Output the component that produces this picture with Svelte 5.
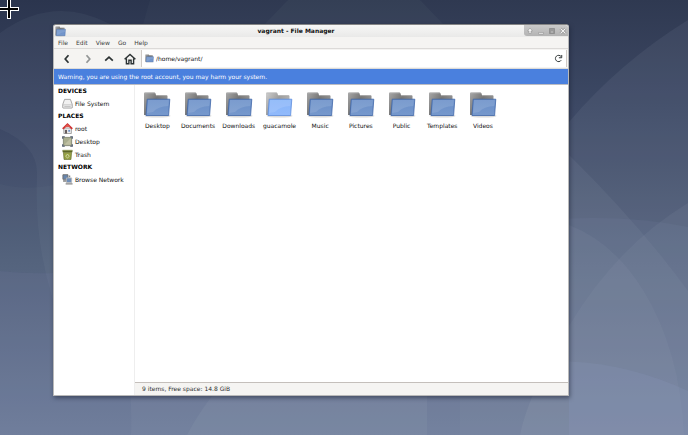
<script lang="ts">
  const menus = ['File', 'Edit', 'View', 'Go', 'Help']

  const groups = [
    { title: 'Devices', items: [{ name: 'File System', icon: 'drive' }] },
    {
      title: 'Places',
      items: [
        { name: 'root', icon: 'home' },
        { name: 'Desktop', icon: 'desktop' },
        { name: 'Trash', icon: 'trash' },
      ],
    },
    { title: 'Network', items: [{ name: 'Browse Network', icon: 'network' }] },
  ]

  const folders = ['Desktop', 'Documents', 'Downloads', 'guacamole', 'Music', 'Pictures', 'Public', 'Templates', 'Videos']

  let path = $state('/home/vagrant/')
  let hovered = $state('guacamole')
</script>

{#snippet folder(size: string, lit: boolean)}
  <svg class={size} viewBox="0 0 28 28" aria-hidden="true">
    <ellipse cx="14.5" cy="25" rx="13" ry="1.600" fill="#000" opacity=".14" />
    <path d="M1 24V2.500q0-1 1-1H11.500q1 0 1.200 1.500l.3 1.200H23.500q1 0 1 1V24z" fill={lit ? 'url(#backLit)' : 'url(#back)'} />
    <path d="M13 4.700H24M1.500 2H11.800" stroke="#b5b5b5" stroke-width=".6" fill="none" />
    <path d="M4.200 8.200H26.800L25.600 24.500H3z" fill={lit ? 'url(#frontLit)' : 'url(#front)'} stroke={lit ? '#5d8ddd' : '#3f66a8'} stroke-width=".8" />
    <path d="M5 9H25.900L25.400 15Q15 15.500 10 21L4.200 22z" fill="#fff" opacity=".12" />
  </svg>
{/snippet}

<div class="desktop">
  <svg class="wallpaper" viewBox="0 0 688 435" preserveAspectRatio="none" aria-hidden="true">
    <defs>
      <linearGradient id="sky" x2="0" y2="1">
        <stop offset="0" stop-color="#2b354e" />
        <stop offset=".25" stop-color="#3a4562" />
        <stop offset=".6" stop-color="#52607b" />
        <stop offset="1" stop-color="#6c7b98" />
      </linearGradient>
      <linearGradient id="back" x2="1" y2=".6"><stop stop-color="#a8a8a8" /><stop offset=".5" stop-color="#757575" /><stop offset="1" stop-color="#9c9c9c" /></linearGradient>
      <linearGradient id="backLit" x2="1" y2=".6"><stop stop-color="#cfcfcf" /><stop offset=".5" stop-color="#9c9c9c" /><stop offset="1" stop-color="#bbb" /></linearGradient>
      <linearGradient id="front" x2="0" y2="1"><stop stop-color="#688ec8" /><stop offset="1" stop-color="#7698cc" /></linearGradient>
      <linearGradient id="frontLit" x2="0" y2="1"><stop stop-color="#87b4f9" /><stop offset="1" stop-color="#91bafb" /></linearGradient>
    </defs>
    <rect width="688" height="435" fill="url(#sky)" />
    <g fill="#9ba8b8" fill-opacity=".1">
      <path d="M0 33Q53-6 110 24V300H53Q34 240 37 175 38 145 0 129z" fill-opacity=".07" />
      <path d="M0 184Q26 191 53 185V273Q26 274 0 271z" fill-opacity=".04" />
      <path d="M150 0H688V300H143V24z" fill-opacity=".04" />
      <path d="M288 0H420L443 24H265z" fill-opacity=".05" />
      <path d="M0 271Q30 274 53 273V435H0z" fill="#8a95b6" fill-opacity=".13" />
      <path d="M688 20Q620 62 569 122V435H688z" />
      <path d="M569 155Q640 225 688 291V435H569z" />
      <path d="M569 218.500Q635 216 688 227V435H569z" fill="#8b97bd" />
      <path d="M569 225Q613 242 643 290 680 350 684 435H569z" />
      <path d="M688 203Q617 246 569 326V435H688z" />
      <path d="M569 361.500Q630 364 688 391V435H569z" fill="#97a5d0" fill-opacity=".14" />
      <path d="M53 390H569V435H53z" fill="#8a95b6" fill-opacity=".13" />
      <path d="M130 390Q132 415 131 435H569V390z" />
      <path d="M217 390Q200 410 187 435H427V390z" fill-opacity=".14" />
      <path d="M460 390V435H569V390z" fill-opacity=".08" />
      <path d="M535 390Q524 415 520 435H569V390z" fill-opacity=".18" />
    </g>
  </svg>

  <svg class="cursor" viewBox="0 0 19 19" aria-hidden="true">
    <path d="M7 0h4v7h8v4h-8v8H7v-8H0V7h7z" fill="#fff" />
    <path d="M8 0h2v8h8v2h-8v8H8v-8H0V8h8z" />
  </svg>

  <main class="window">
    <header class="titlebar">
      {@render folder('app-icon', false)}
      <h1>vagrant - File Manager</h1>
      <div class="controls">
        <button aria-label="Roll up"><svg viewBox="0 0 8 8"><path d="M4 1l2.500 3H5v2.500H3V4H1.500z" /></svg></button>
        <button aria-label="Minimize"><svg viewBox="0 0 8 8"><path d="M1.500 5.500h5V7h-5z" /></svg></button>
        <button aria-label="Maximize"><svg viewBox="0 0 8 8"><path d="M1.500 1.500h5v5h-5z" fill="#999" stroke="#777" /><path d="M3 5h2" stroke="#eee" /></svg></button>
        <button aria-label="Close"><svg viewBox="0 0 8 8"><path d="M1.500 1.500l5 5m0-5l-5 5" stroke="#777" stroke-width="2.400" /><path d="M1.500 1.500l5 5m0-5l-5 5" stroke="#f4f4f4" stroke-width="1.200" /></svg></button>
      </div>
    </header>

    <nav class="menubar">
      {#each menus as menu}
        <button>{menu}</button>
      {/each}
    </nav>

    <div class="toolbar">
      <button aria-label="Back"><svg viewBox="0 0 12 12"><path d="M7.500 2.200L4.200 6l3.300 3.800" /></svg></button>
      <button aria-label="Forward" disabled><svg viewBox="0 0 12 12"><path d="M4.500 2.200L7.800 6 4.500 9.800" /></svg></button>
      <button aria-label="Parent folder"><svg viewBox="0 0 12 12"><path d="M2.200 7.700L6 4.200l3.800 3.500" /></svg></button>
      <button aria-label="Home"><svg viewBox="0 0 12 12"><path d="M.6 6.200L6 1.500l5.400 4.700M2.400 5.500v5.300h2.500V7.300h2.200v3.500h2.500V5.500" stroke-width="1.400" /></svg></button>
      <div class="location">
        {@render folder('path-icon', false)}
        <input aria-label="Location" bind:value={path} />
        <button aria-label="Reload"><svg viewBox="0 0 12 12"><path d="M9.600 8.300A4.200 4.200 0 1 1 9.500 3.500M10.300 1.300v3.700H6.500" stroke-width="1.300" /></svg></button>
      </div>
    </div>

    <p class="warning">Warning, you are using the root account, you may harm your system.</p>

    <div class="body">
      <aside>
        {#each groups as group}
          <h2>{group.title}</h2>
          {#each group.items as item}
            <button class="place">
              <svg viewBox="0 0 12 12" aria-hidden="true">
                {#if item.icon === 'drive'}
                  <path d="M2.800 1.500h6.400l2 5.500v3.500q0 .5-.5.500H1.300q-.5 0-.5-.5V7z" fill="#f1f1f1" stroke="#8d8d8d" stroke-width=".8" />
                  <path d="M1 7.500h10M2.500 9.300h7" stroke="#aaa" stroke-width=".7" />
                {:else if item.icon === 'home'}
                  <path d="M2 5.500h8.200V11.500H2z" fill="#eee" stroke="#888" stroke-width=".8" />
                  <path d="M3.200 7.500h2.300v4H3.200z" fill="#665d5d" />
                  <path d="M6.800 7.500h2v2h-2z" fill="#6e91c9" />
                  <path d="M.8 6.500L6 1.500l5.200 5" fill="none" stroke="#cf3434" stroke-width="2" />
                  <path d="M2.800 4.500L6 1.300l3 3z" fill="#e25a50" />
                {:else if item.icon === 'desktop'}
                  <path d="M1.500 1.500h9v9h-9z" fill="#a9ad8e" stroke="#7d826f" stroke-width=".9" />
                  <path d="M2.500 9.500L9.500 2.500v7z" fill="#bfc0a2" />
                  <path d="M.8 3V.8H3M9 .8h2.200V3M11.200 9v2.200H9M3 11.200H.8V9" fill="none" stroke="#4c5869" stroke-width="1.300" />
                {:else if item.icon === 'trash'}
                  <path d="M1.500 3.500h9l-.7 8H2.200z" fill="#94a043" stroke="#566020" stroke-width=".6" />
                  <path d="M.6 1h10.800v2.500H.6z" fill="#5c6727" />
                  <path d="M1 1.500h10" stroke="#b6be7c" stroke-width=".7" />
                  <path d="M4 8l2-2.500L8 8 6 9.700z" fill="none" stroke="#dde3b1" stroke-width=".9" />
                {:else}
                  <path d="M1 .8h5.500v5H1z" fill="#6685ad" stroke="#6c6c6c" stroke-width="1" />
                  <path d="M1.200 6.700h4.800v1.800H1.200z" fill="#888" />
                  <path d="M4.800 4.300h5.700v5H4.800z" fill="#6f8fba" stroke="#b9b9b9" stroke-width=".9" />
                  <path d="M4 10h7.500v1.500H4zM7.500 1.500h1.500v2H7.500z" fill="#858585" />
                {/if}
              </svg>
              {item.name}
            </button>
          {/each}
        {/each}
      </aside>

      <section>
        <div class="files">
          {#each folders as name}
            <button class="file" onmouseenter={() => (hovered = name)}>
              {@render folder('file-icon', hovered === name)}
              <span>{name}</span>
            </button>
          {/each}
        </div>
        <footer>9 items, Free space: 14.8 GiB</footer>
      </section>
    </div>
  </main>
</div>

<style>
  :global(body) {
    margin: 0;
  }
  .desktop {
    position: relative;
    display: flex;
    box-sizing: border-box;
    min-height: 100vh;
    padding: 24px 119px 39px 53px;
    font: 6px/12px 'DejaVu Sans', sans-serif;
    color: #111;
    overflow: hidden;
  }
  .wallpaper {
    position: absolute;
    inset: 0;
    width: 100%;
    height: 100%;
  }
  .cursor {
    position: absolute;
    top: 0;
    left: 0;
    width: 19px;
    height: 19px;
  }
  button {
    display: flex;
    align-items: center;
    justify-content: center;
    padding: 0;
    border: 0;
    background: none;
    font: inherit;
    color: inherit;
  }
  h1,
  h2,
  p {
    margin: 0;
    font-size: 6px;
  }
  .window {
    position: relative;
    display: flex;
    flex: 1;
    flex-direction: column;
    min-width: 0;
    box-sizing: border-box;
    border: 1px solid #b9b9b9;
    border-top-color: #858585;
    border-radius: 3px 3px 0 0;
    background: #f5f4f2;
    box-shadow: 1px 2px 4px rgba(20, 26, 44, 0.5);
  }
  .titlebar {
    display: flex;
    align-items: center;
    height: 12px;
    padding-left: 1px;
    border-radius: 3px 3px 0 0;
    background: linear-gradient(#f7f7f6, #e9e9e8);
  }
  .titlebar h1 {
    flex: 1;
    padding-left: 2px;
    text-align: center;
  }
  .app-icon {
    width: 11px;
    height: 11px;
  }
  .controls {
    display: flex;
    align-self: flex-start;
    border-radius: 0 3px 0 3px;
    background: linear-gradient(#cacaca, #b3b3b3);
  }
  .controls button {
    width: 11px;
    height: 11px;
  }
  .controls svg {
    width: 8px;
    height: 8px;
    fill: #f3f3f3;
    stroke: #888;
    stroke-width: 0.5;
  }
  .menubar {
    display: flex;
    gap: 8px;
    padding: 0 4px;
    border-bottom: 1px solid #dcdad8;
    color: #3c4041;
  }
  .menubar button {
    height: 11px;
  }
  .toolbar {
    display: flex;
    padding: 1px 1px 1px 2px;
    border-bottom: 1px solid #dddcda;
  }
  .toolbar button {
    width: 21px;
    height: 17px;
  }
  .toolbar button svg {
    width: 12px;
    height: 12px;
    fill: none;
    stroke: #2c3233;
    stroke-width: 1.7;
  }
  .toolbar button:disabled svg {
    stroke: #929595;
  }
  .location {
    display: flex;
    flex: 1;
    align-items: center;
    margin-left: 1px;
    border: 1px solid #cfcac6;
    border-width: 0 1px;
    padding-left: 3px;
    background: #fff;
  }
  .path-icon {
    width: 9px;
    height: 9px;
  }
  .location input {
    flex: 1;
    min-width: 0;
    padding: 0 2px;
    border: 0;
    outline: 0;
    background: none;
    font: inherit;
    color: inherit;
  }
  .location button {
    width: 16px;
  }
  .location button svg {
    width: 9px;
    height: 9px;
  }
  .warning {
    padding: 0 4px;
    border-bottom: 1px solid #bbbcc2;
    background: #4a80de;
    line-height: 15px;
    color: #fff;
  }
  .body {
    display: flex;
    flex: 1;
    background: #fff;
  }
  aside {
    width: 80px;
    border-right: 1px solid #eee;
  }
  h2 {
    padding-left: 4px;
    line-height: 12px;
    text-transform: uppercase;
    color: #000;
  }
  .place {
    gap: 2px;
    height: 13px;
    padding-left: 8px;
    white-space: nowrap;
  }
  .place svg {
    width: 11px;
    height: 11px;
  }
  section {
    display: flex;
    flex: 1;
    flex-direction: column;
    min-width: 0;
  }
  .files {
    display: grid;
    flex: 1;
    grid-template-columns: repeat(auto-fill, minmax(40px, 1fr));
    align-content: start;
    padding: 6px 24px 0 2px;
  }
  .file {
    flex-direction: column;
    gap: 1px;
  }
  .file-icon {
    width: 28px;
    height: 28px;
  }
  footer {
    padding: 0 7px;
    border-top: 1px solid #c4bfbb;
    background: #f5f4f2;
    color: #2c2f30;
  }
</style>
